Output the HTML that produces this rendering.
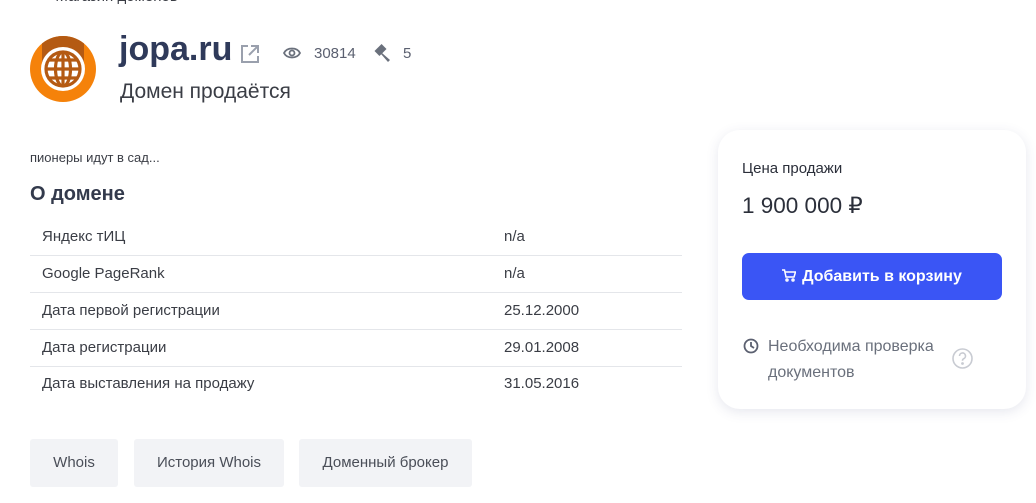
<!DOCTYPE html>
<html><head><meta charset="utf-8"><style>
*{margin:0;padding:0;box-sizing:border-box}
body{width:1036px;height:503px;overflow:hidden;background:#fff;font-family:"Liberation Sans",sans-serif;position:relative;color:#2b2f3a}
.a{position:absolute;white-space:nowrap}
.row{position:absolute;left:30px;width:652px;height:37px;border-bottom:1px solid #e4e6ea;font-size:15px;color:#3a3d45}
.row span{position:absolute;top:9px}
.btn{position:absolute;top:439px;height:48px;background:#f2f3f6;border-radius:3px;font-size:15px;color:#4a4e58;text-align:center;line-height:48px}
</style></head><body>
<div class="a" style="left:30px;top:-12px;font-size:15px;color:#3a3d45">&lt;&nbsp;&nbsp;&nbsp;&nbsp;Магазин доменов</div>
<svg class="a" style="left:30px;top:36px" width="66" height="66" viewBox="0 0 66 66">
<defs><clipPath id="c"><circle cx="33" cy="33" r="33"/></clipPath></defs>
<circle cx="33" cy="33" r="33" fill="#f5820a"/>
<rect x="12" y="0" width="42" height="26" fill="#b45a13" clip-path="url(#c)"/>
<circle cx="33" cy="33" r="22" fill="#fff"/>
<g fill="none" stroke="#b45a13" stroke-width="3.2">
<circle cx="33" cy="33" r="17"/>
<ellipse cx="33" cy="33" rx="7.5" ry="17"/>
<line x1="33" y1="16" x2="33" y2="50"/>
<line x1="16" y1="33" x2="50" y2="33"/>
<line x1="19" y1="24" x2="47" y2="24"/>
<line x1="19" y1="42" x2="47" y2="42"/>
</g></svg>
<div class="a" style="left:119px;top:30px;font-size:34px;font-weight:bold;color:#2f3a5a">jopa.ru</div>
<svg class="a" style="left:240px;top:44px" width="20" height="20" viewBox="0 0 20 20" fill="none" stroke="#9aa0ad" stroke-width="2"><path d="M8 2H2v16h16v-6M11 2h7v7M18 2l-9 9"/></svg>
<svg class="a" style="left:283px;top:46px" width="18" height="14" viewBox="0 0 18 14" fill="none" stroke="#6a707c" stroke-width="1.8"><path d="M1 7C4 1 14 1 17 7C14 13 4 13 1 7Z"/><circle cx="9" cy="7" r="2.5"/></svg>
<div class="a" style="left:314px;top:45px;font-size:15px;color:#5b6070">30814</div>
<svg class="a" style="left:372px;top:44px" width="20" height="18" viewBox="0 0 20 18"><g fill="#6a707c"><rect x="5" y="1" width="7" height="10" transform="rotate(45 8.5 6)"/><path d="M10 9l8 7-2 2-7-8z"/></g></svg>
<div class="a" style="left:403px;top:45px;font-size:15px;color:#5b6070">5</div>
<div class="a" style="left:120px;top:80px;font-size:21px;color:#3a3d45">Домен продаётся</div>
<div class="a" style="left:30px;top:150px;font-size:13px;color:#3a3d45">пионеры идут в сад...</div>
<div class="a" style="left:30px;top:183px;font-size:20px;font-weight:bold;color:#333a4c">О домене</div>
<div class="row" style="top:219px"><span style="left:12px">Яндекс тИЦ</span><span style="left:474px">n/a</span></div>
<div class="row" style="top:256px"><span style="left:12px">Google PageRank</span><span style="left:474px">n/a</span></div>
<div class="row" style="top:293px"><span style="left:12px">Дата первой регистрации</span><span style="left:474px">25.12.2000</span></div>
<div class="row" style="top:330px"><span style="left:12px">Дата регистрации</span><span style="left:474px">29.01.2008</span></div>
<div class="row" style="top:366px;border:none"><span style="left:12px">Дата выставления на продажу</span><span style="left:474px">31.05.2016</span></div>
<div class="btn" style="left:30px;width:88px">Whois</div>
<div class="btn" style="left:134px;width:150px">История Whois</div>
<div class="btn" style="left:299px;width:173px">Доменный брокер</div>
<div class="a" style="left:718px;top:130px;width:308px;height:279px;border-radius:22px;background:#fff;box-shadow:0 3px 12px rgba(60,70,120,.13)"></div>
<div class="a" style="left:742px;top:160px;font-size:15px;color:#2b2f3a">Цена продажи</div>
<div class="a" style="left:742px;top:193px;font-size:22.5px;color:#2b2f3a">1 900 000 ₽</div>
<div class="a" style="left:742px;top:253px;width:260px;height:47px;background:#3a55f5;border-radius:7px;color:#fff;font-size:16px;font-weight:bold;text-align:center;line-height:47px">
<svg width="14" height="13" viewBox="0 0 14 13" fill="none" stroke="#fff" stroke-width="1.5" style="vertical-align:-1px;margin-right:6px"><path d="M0 1h2.5l1.5 7h8l1.5-5H3.5"/><circle cx="5" cy="11" r="1"/><circle cx="11" cy="11" r="1"/></svg>Добавить в корзину</div>
<svg class="a" style="left:743px;top:338px" width="16" height="16" viewBox="0 0 16 16" fill="none" stroke="#5b6070" stroke-width="1.8"><circle cx="8" cy="8" r="6.5"/><path d="M8 4v4l3 2"/></svg>
<div class="a" style="left:768px;top:334px;font-size:16px;color:#6a707c;line-height:26px">Необходима проверка<br>документов</div>
<svg class="a" style="left:952px;top:348px" width="21" height="21" viewBox="0 0 21 21" fill="none" stroke="#c8cbd2" stroke-width="1.6"><circle cx="10.5" cy="10.5" r="9.5"/><path d="M7.5 8a3 3 0 1 1 4 2.8c-.8.4-1 1-1 2"/><circle cx="10.5" cy="15.5" r=".6" fill="#c8cbd2"/></svg>
</body></html>
